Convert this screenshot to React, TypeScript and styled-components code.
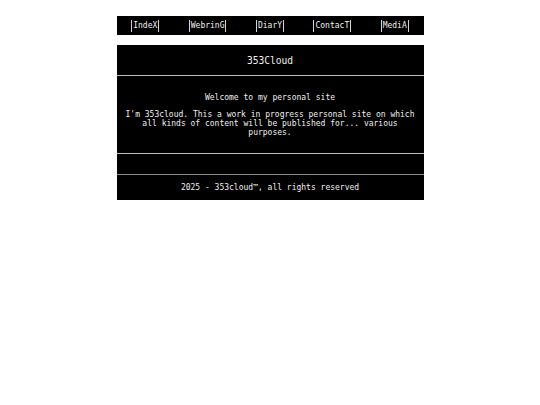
import React from "react";
import styled, { createGlobalStyle } from "styled-components";

const GlobalStyle = createGlobalStyle`
  html, body {
    margin: 0;
    padding: 0;
    background: #fff;
  }
  body {
    font-family: "DejaVu Sans Mono", monospace;
  }
`;

const Page = styled.div`
  width: 307px;
  margin: 0 auto;
  padding-top: 16px;
  display: flex;
  flex-direction: column;
  gap: 10px;
`;

const NavBar = styled.nav`
  height: 19px;
  background: #000;
  display: flex;
  justify-content: space-around;
  align-items: center;
`;

const NavLink = styled.a`
  display: flex;
  align-items: center;
  height: 12px;
  padding: 0 1px;
  border-left: 1px solid #d4d4d4;
  border-right: 1px solid #d4d4d4;
  color: #f2f2f2;
  font-size: 8px;
  text-decoration: none;
  cursor: pointer;
`;

const Box = styled.div`
  background: #000;
  color: #f0f0f0;
  display: flex;
  flex-direction: column;
`;

const Header = styled.header`
  height: 30px;
  display: flex;
  align-items: center;
  justify-content: center;
  font-size: 9.6px;
  border-bottom: 1px solid #bdbdbd;
`;

const Content = styled.section`
  height: 78px;
  box-sizing: border-box;
  padding: 17px 8px 0;
  text-align: center;
  font-size: 8px;
  border-bottom: 1px solid #bdbdbd;

  p {
    margin: 0 0 8px;
  }
`;

const Spacer = styled.div<{ $h: number }>`
  height: ${(p) => p.$h}px;
  border-bottom: 1px solid #8a8a8a;
`;

const Footer = styled.footer`
  height: 25px;
  display: flex;
  align-items: center;
  justify-content: center;
  font-size: 8px;
`;

const links = ["IndeX", "WebrinG", "DiarY", "ContacT", "MediA"];

export default function App() {
  return (
    <>
      <GlobalStyle />
      <Page>
        <NavBar>
          {links.map((l) => (
            <NavLink key={l}>{l}</NavLink>
          ))}
        </NavBar>
        <Box>
          <Header>353Cloud</Header>
          <Content>
            <p>Welcome to my personal site</p>
            <p>
              I'm 353cloud. This a work in progress personal site on which all
              kinds of content will be published for... various purposes.
            </p>
          </Content>
          <Spacer $h={20} />
          <Footer>2025 - 353cloud™, all rights reserved</Footer>
        </Box>
      </Page>
    </>
  );
}
